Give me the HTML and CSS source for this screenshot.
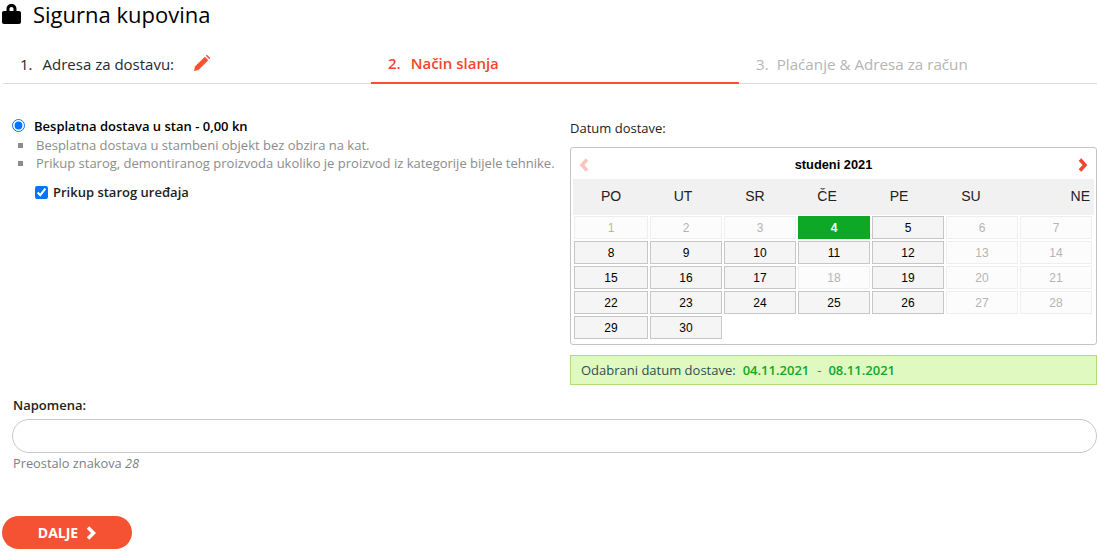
FILE: index.html
```html
<!DOCTYPE html>
<html lang="hr">
<head>
<meta charset="utf-8">
<title>Sigurna kupovina</title>
<link rel="stylesheet" href="styles.css">
</head>
<body>
<header class="title">
  <svg class="lock" viewBox="0 0 19 20" aria-hidden="true"><path fill-rule="evenodd" d="M4.500 7V5C4.500 2 6.500 0 9.500 0s5 2 5 5v2H17c1.200 0 2 .8 2 2v9c0 1.200-.8 2-2 2H2c-1.200 0-2-.8-2-2V9c0-1.200.8-2 2-2h2.500zM7.500 7h4V5c0-1.300-.7-2-2-2s-2 .7-2 2v2z"/></svg>
  <h1>Sigurna kupovina</h1>
</header>
<nav class="tabs">
  <div class="tab done"><span class="num">1.</span>Adresa za dostavu:
    <svg class="pencil" viewBox="0 0 16 16" aria-hidden="true"><path d="M0 16l1-4.500L10.800 1.700l3.500 3.500L4.500 15z"/><path d="M11.800.7l.5-.5c.3-.3.8-.3 1.100 0l2.400 2.400c.3.3.3.8 0 1.100l-.5.5z"/></svg>
  </div>
  <div class="tab active"><span class="num">2.</span>Način slanja</div>
  <div class="tab todo"><span class="num">3.</span>Plaćanje &amp; Adresa za račun</div>
</nav>
<main class="columns">
  <section class="shipping">
    <label class="option"><input type="radio" name="dostava" checked>Besplatna dostava u stan - 0,00 kn</label>
    <ul class="notes">
      <li>Besplatna dostava u stambeni objekt bez obzira na kat.</li>
      <li>Prikup starog, demontiranog proizvoda ukoliko je proizvod iz kategorije bijele tehnike.</li>
    </ul>
    <label class="pickup"><input type="checkbox" checked>Prikup starog uređaja</label>
  </section>
  <section class="date">
    <div class="date-label">Datum dostave:</div>
    <div class="calendar">
      <div class="cal-head">
        <svg class="chev faded" viewBox="0 0 10 14" aria-hidden="true"><path d="M7.500 1.500 2.500 7l5 5.500" /></svg>
        <strong>studeni 2021</strong>
        <svg class="chev" viewBox="0 0 10 14" aria-hidden="true"><path d="M2.500 1.500 7.500 7l-5 5.500" /></svg>
      </div>
      <div class="weekdays"><span>PO</span><span>UT</span><span>SR</span><span>ČE</span><span>PE</span><span>SU</span><span class="last">NE</span></div>
      <div class="days">
        <span class="off">1</span><span class="off">2</span><span class="off">3</span><span class="sel">4</span><span>5</span><span class="off">6</span><span class="off">7</span>
        <span>8</span><span>9</span><span>10</span><span>11</span><span>12</span><span class="off">13</span><span class="off">14</span>
        <span>15</span><span>16</span><span>17</span><span class="off">18</span><span>19</span><span class="off">20</span><span class="off">21</span>
        <span>22</span><span>23</span><span>24</span><span>25</span><span>26</span><span class="off">27</span><span class="off">28</span>
        <span>29</span><span>30</span>
      </div>
    </div>
    <div class="picked">Odabrani datum dostave:<b>04.11.2021</b><i>-</i><b>08.11.2021</b></div>
  </section>
</main>
<section class="note">
  <label class="note-label" for="napomena">Napomena:</label>
  <input class="note-input" id="napomena" type="text">
  <div class="remain">Preostalo znakova <em>28</em></div>
</section>
<button class="next" type="button">DALJE
  <svg viewBox="0 0 10 14" aria-hidden="true"><path d="M2.500 1.500 8 7l-5.500 5.500"/></svg>
</button>
</body>
</html>
```
FILE: styles.css
```css
* { box-sizing: border-box; }
html, body { margin: 0; padding: 0; }
body {
  width: 1097px;
  height: 553px;
  overflow: hidden;
  background: #fff;
  color: #000;
  font-family: "Open Sans", sans-serif;
  font-size: 13px;
}
.title {
  display: flex;
  align-items: center;
  height: 32px;
  padding: 0 0 4px 2px;
}
.lock { width: 19px; height: 20px; fill: #000; margin-right: 12px; }
.title h1 { margin: 0; font-size: 22px; font-weight: 400; line-height: 28px; }
.tabs {
  display: grid;
  grid-template-columns: 368px 368px 1fr;
  height: 52px;
  margin: 0 0 0 3px;
  border-bottom: 1px solid #ddd;
  font-size: 15px;
}
.tab {
  display: flex;
  align-items: center;
  height: 52px;
  padding: 11px 0 0 17px;
  line-height: 20px;
}
.num { margin-right: 10px; }
.done { color: #1c2b36; }
.active { color: #f4442e; border-bottom: 2px solid #f55233; font-weight: 600; padding-top: 12px; }
.todo { color: #b5b5b5; font-weight: 500; font-size: 15.200px; }
.todo .num { margin-right: 8px; }
.pencil { width: 16px; height: 16px; fill: #f55233; margin: 0 0 2px 20px; }
.columns {
  display: flex;
  height: 312px;
  padding-left: 12px;
}
.shipping { width: 558px; padding-top: 32px; }
.option {
  display: flex;
  align-items: center;
  height: 20px;
  font-weight: 600;
  font-size: 13px;
}
.option input { width: 13px; height: 13px; margin: 0 9px 2px 0; accent-color: #0075ff; }
.notes {
  list-style: none;
  margin: 0;
  padding: 0 0 0 6px;
  color: #8c8c8c;
  font-size: 13px;
}
.notes li { display: flex; align-items: center; height: 18px; }
.notes li::before {
  content: "";
  width: 5px;
  height: 5px;
  margin-right: 13px;
  background: #8c8c8c;
}
.pickup {
  display: flex;
  align-items: center;
  height: 20px;
  margin: 10px 0 0 23px;
  font-weight: 600;
  font-size: 13px;
  color: #222;
}
.pickup input { width: 13px; height: 13px; margin: 0 5px 0 0; accent-color: #0075ff; }
.date { width: 527px; padding-top: 35px; }
.date-label { height: 28px; font-size: 13px; line-height: 18px; color: #222; }
.calendar {
  height: 198px;
  padding: 0 2px;
  border: 1px solid #c4c4c4;
  border-radius: 3px;
  font-family: "Liberation Sans", Arial, sans-serif;
}
.cal-head {
  display: flex;
  align-items: center;
  justify-content: space-between;
  height: 31px;
  padding: 1px 6px 0 6px;
  font-size: 12.800px;
}
.chev { width: 11px; height: 14px; margin-top: 2px; fill: none; stroke: #f4442e; stroke-width: 3.500; }
.faded { stroke: #fbc5bd; }
.weekdays {
  display: grid;
  grid-template-columns: repeat(6, 72px) 1fr;
  height: 36px;
  align-items: center;
  background: #f1f1f1;
  font-size: 14px;
  color: #222;
  padding: 0 0 2px 2px;
}
.weekdays span { text-align: center; }
.weekdays .last { text-align: right; padding-right: 4px; }
.days {
  display: grid;
  grid-template-columns: 74px repeat(6, 72px);
  grid-auto-rows: 23px;
  gap: 2px;
  margin-top: 1px;
  padding-left: 1px;
  font-size: 12px;
}
.days span {
  display: flex;
  align-items: center;
  justify-content: center;
  background: #f5f5f5;
  border: 1px solid #c6c6c6;
  color: #000;
}
.days .off { background: #fcfcfc; border-color: #eee; color: #b5b5b5; }
.days .sel { background: #0da826; border-color: #0da826; color: #fff; font-weight: 700; }
.picked {
  display: flex;
  align-items: center;
  height: 30px;
  margin-top: 10px;
  padding-left: 10px;
  background: #dff9c1;
  border: 1px solid #b1dd77;
  color: #2f4f4f;
  font-size: 13px;
}
.picked b { color: #0da826; font-weight: 600; margin-left: 7px; }
.picked i { font-style: normal; color: #0da826; margin: 0 0 0 8px; }
.note { padding-left: 12px; }
.note-label { display: block; height: 20px; padding-left: 1px; font-size: 13px; font-weight: 600; line-height: 19px; color: #222; }
.note-input {
  display: block;
  width: 1085px;
  height: 34px;
  margin-top: 3px;
  border: 1px solid #c8c8c8;
  border-radius: 17px;
  background: #fff;
  outline: none;
}
.remain { margin-top: 2px; padding-left: 1px; font-size: 12.800px; line-height: 16px; color: #7a828a; }
.next {
  display: flex;
  align-items: center;
  justify-content: center;
  gap: 7px;
  width: 130px;
  height: 33px;
  margin: 45px 0 0 2px;
  border: 0;
  border-radius: 17px;
  background: #f55233;
  color: #fff;
  font-family: "Open Sans", sans-serif;
  font-weight: 700;
  font-size: 14px;
}
.next svg { width: 11px; height: 14px; fill: none; stroke: #fff; stroke-width: 3.500; }
```
